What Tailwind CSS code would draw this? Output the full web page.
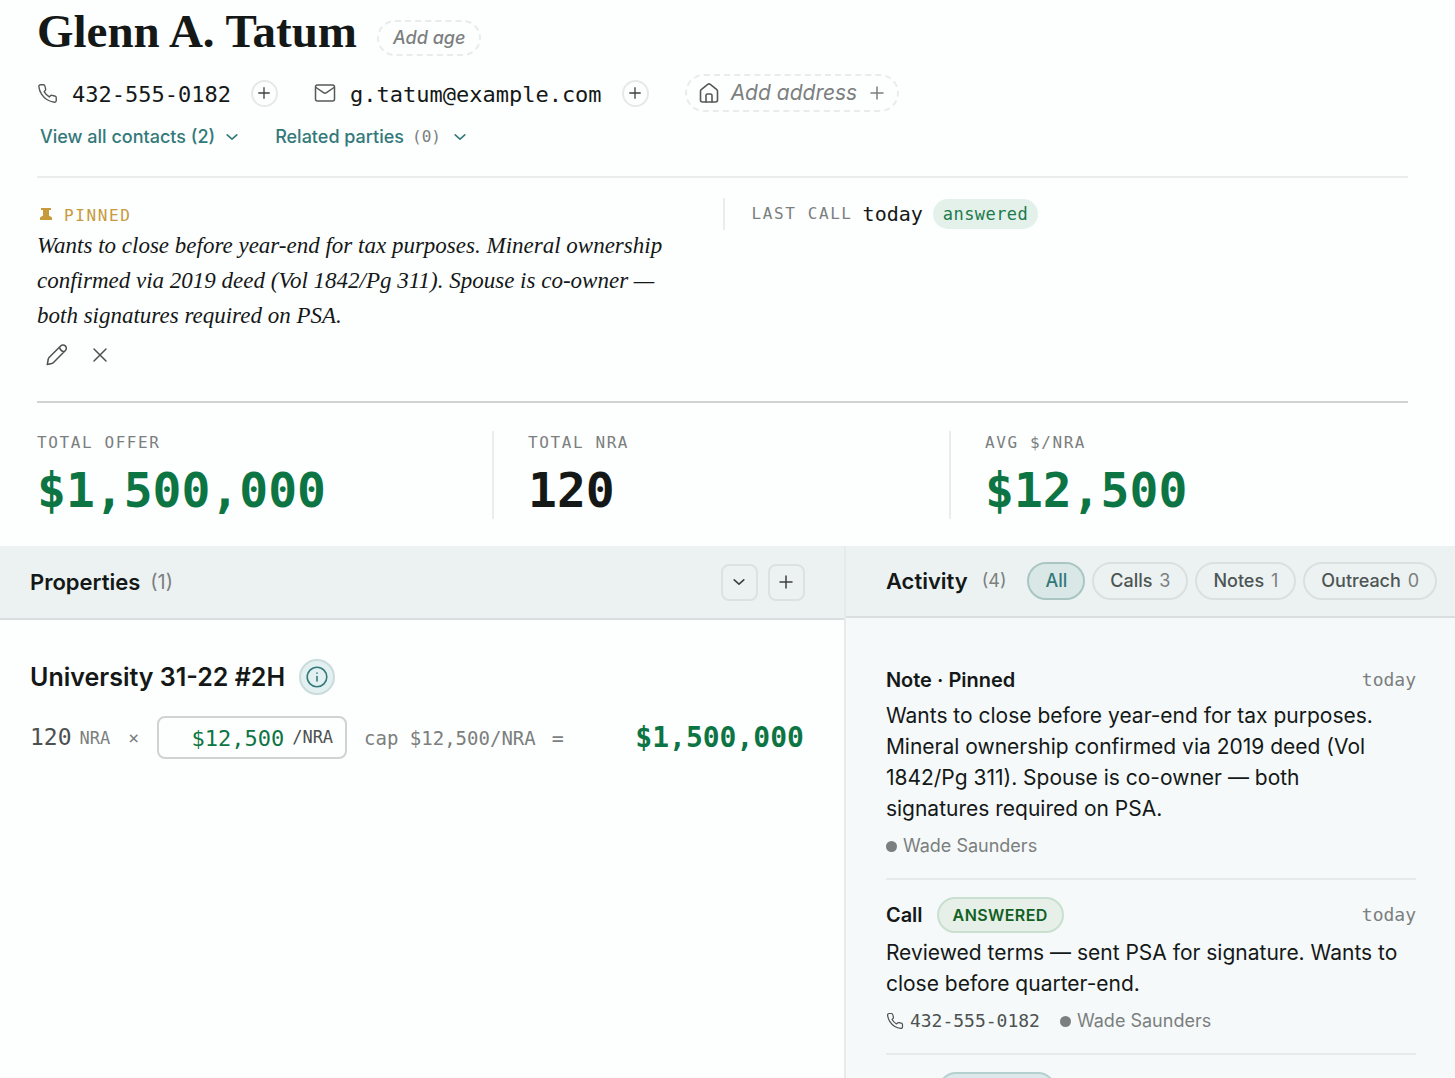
<!DOCTYPE html>
<html lang="en">
<head>
  <meta charset="UTF-8" />
  <meta name="viewport" content="width=device-width, initial-scale=1.0" />
  <title>Glenn A. Tatum</title>
  <script src="https://cdn.jsdelivr.net/npm/@tailwindcss/browser@4"></script>
</head>
<body class="h-screen overflow-hidden flex flex-col bg-[#fdfefe] text-[#141817] font-['Inter',sans-serif]">

  <!-- Shared icons -->
  <svg class="hidden">
    <symbol id="phone" viewBox="0 0 24 24" fill="none" stroke="currentColor" stroke-linecap="round" stroke-linejoin="round">
      <path d="M22 16.92v3a2 2 0 0 1-2.18 2 19.79 19.79 0 0 1-8.63-3.07 19.5 19.5 0 0 1-6-6 19.79 19.79 0 0 1-3.07-8.67A2 2 0 0 1 4.11 2h3a2 2 0 0 1 2 1.72 12.84 12.84 0 0 0 .7 2.81 2 2 0 0 1-.45 2.11L8.09 9.91a16 16 0 0 0 6 6l1.27-1.27a2 2 0 0 1 2.11-.45 12.84 12.84 0 0 0 2.81.7A2 2 0 0 1 22 16.92z" />
    </symbol>
    <symbol id="plus" viewBox="0 0 16 16" fill="none" stroke="currentColor" stroke-linecap="round">
      <path d="M8 2v12M2 8h12" />
    </symbol>
    <symbol id="chevron" viewBox="0 0 16 16" fill="none" stroke="currentColor" stroke-linecap="round" stroke-linejoin="round">
      <path d="M2.500 5.500L8 10.500l5.500-5" />
    </symbol>
  </svg>

  <header class="pl-[37px] pr-[47px] pt-1">
    <div class="flex items-center gap-5">
      <h1 class="text-[47px] leading-[54px] font-bold font-['Liberation_Serif',serif]">Glenn A. Tatum</h1>
      <button class="mt-3.5 h-9 px-3.5 rounded-full border-2 border-dashed border-[#e9ecec] text-lg leading-8 italic font-medium text-[#7b7f7e]">Add age</button>
    </div>

    <div class="flex items-center h-[38px] mt-4 font-['DejaVu_Sans_Mono',monospace] text-[22px]">
      <svg class="size-[21px] text-[#555958] stroke-[1.6]"><use href="#phone" /></svg>
      <a href="tel:4325550182" class="ml-3.5 pt-0.5">432-555-0182</a>
      <button aria-label="Add phone" class="ml-5 size-[27px] rounded-full border-2 border-[#e6e9e9] flex items-center justify-center text-[#3d4140]"><svg class="size-3.5 stroke-[1.5]"><use href="#plus" /></svg></button>
      <svg class="ml-9 size-[22px] text-[#555958]" viewBox="0 0 22 22" fill="none" stroke="currentColor" stroke-width="1.5" stroke-linejoin="round" stroke-linecap="round"><rect x="1.5" y="3" width="19" height="16" rx="2" /><path d="M2 5.5l7.5 5.2a2.6 2.6 0 0 0 3 0L20 5.5" /></svg>
      <a href="mailto:g.tatum@example.com" class="ml-3.5 pt-0.5">g.tatum@example.com</a>
      <button aria-label="Add email" class="ml-5 size-[27px] rounded-full border-2 border-[#e6e9e9] flex items-center justify-center text-[#3d4140]"><svg class="size-3.5 stroke-[1.5]"><use href="#plus" /></svg></button>
      <button class="ml-9 h-[38px] px-3 rounded-full border-2 border-dashed border-[#e9ecec] flex items-center gap-3 font-['Inter',sans-serif] text-[21px] italic text-[#7b7f7e]">
        <svg class="size-5 text-[#555958]" viewBox="0 0 20 20" fill="none" stroke="currentColor" stroke-width="1.6" stroke-linejoin="round" stroke-linecap="round"><path d="M1.5 8.2a2 2 0 0 1 .7-1.5l6.5-5.3a2 2 0 0 1 2.6 0l6.5 5.3a2 2 0 0 1 .7 1.5V17a2 2 0 0 1-2 2h-13a2 2 0 0 1-2-2z" /><path d="M7 19v-6.5a1.5 1.5 0 0 1 1.5-1.5h3a1.5 1.5 0 0 1 1.5 1.5V19" /></svg>
        Add address
        <svg class="size-4 stroke-[1.5]"><use href="#plus" /></svg>
      </button>
    </div>

    <div class="flex items-center gap-9 h-6 mt-[13px] pl-[3px] text-lg font-medium text-[#33797a]">
      <button class="flex items-center gap-2.5">View all contacts (2) <svg class="size-3.5 stroke-[1.8]"><use href="#chevron" /></svg></button>
      <button class="flex items-center gap-2">Related parties <span class="font-normal font-['DejaVu_Sans_Mono',monospace] text-base text-[#7b7f7e]">(0)</span> <svg class="ml-1 size-3.5 stroke-[1.8]"><use href="#chevron" /></svg></button>
    </div>

    <div class="grid grid-cols-2 mt-[27px] pt-5 pb-[34px] border-t-2 border-[#eaeded]">
      <section>
        <h2 class="flex items-center gap-3 pl-[3px] h-9 text-base leading-9 font-normal tracking-widest text-[#c79a3b] font-['DejaVu_Sans_Mono',monospace]">
          <svg class="size-3 mb-1" viewBox="0 0 12 12" fill="currentColor"><path d="M1 0h10v2H9v5.500l3 2V12H0V9.500l3-2V2H1z" /></svg>
          PINNED
        </h2>
        <p class="-mt-1.5 max-w-[632px] text-[23px] leading-[35px] italic font-['Liberation_Serif',serif]">Wants to close before year-end for tax purposes. Mineral ownership confirmed via 2019 deed (Vol 1842/Pg 311). Spouse is co-owner — both signatures required on PSA.</p>
        <div class="flex items-center gap-[21px] pl-2 mt-2.5 text-[#4d5150]">
          <button aria-label="Edit note"><svg class="size-6" viewBox="0 0 24 24" fill="none" stroke="currentColor" stroke-width="1.5" stroke-linejoin="round"><path d="M3.800 14.800L15.600 3a2.900 2.900 0 0 1 4.800 4.600L8.500 19.500a4 4 0 0 1-1.800 1L2.300 21.500l.9-5a4 4 0 0 1 .6-1.700zM14.500 4.200q1 3.800 4.600 4.600" /></svg></button>
          <button aria-label="Unpin note"><svg class="size-5" viewBox="0 0 20 20" fill="none" stroke="currentColor" stroke-width="1.5" stroke-linecap="round"><path d="M4 4l12 12M16 4L4 16" /></svg></button>
        </div>
      </section>
      <section class="flex items-center gap-2.5 h-8 pl-[27px] border-l-2 border-[#eaeded] font-['DejaVu_Sans_Mono',monospace]">
        <span class="text-base tracking-widest text-[#7b7f7e]">LAST CALL</span>
        <span class="text-xl">today</span>
        <span class="h-[30px] px-2.5 rounded-full bg-[#e3f1ea] text-[17px] leading-[30px] tracking-wide text-[#1b7a4b]">answered</span>
      </section>
    </div>

    <dl class="grid grid-cols-3 pt-7 pb-[27px] border-t-2 border-[#cfd3d2] font-['DejaVu_Sans_Mono',monospace]">
      <div class="border-r-2 border-[#eaeded]">
        <dt class="text-base leading-6 tracking-widest text-[#7b7f7e]">TOTAL OFFER</dt>
        <dd class="mt-1.5 text-5xl leading-[58px] font-bold text-[#0d7544]">$1,500,000</dd>
      </div>
      <div class="pl-[34px] border-r-2 border-[#eaeded]">
        <dt class="text-base leading-6 tracking-widest text-[#7b7f7e]">TOTAL NRA</dt>
        <dd class="mt-1.5 text-5xl leading-[58px] font-bold">120</dd>
      </div>
      <div class="pl-[34px]">
        <dt class="text-base leading-6 tracking-widest text-[#7b7f7e]">AVG $/NRA</dt>
        <dd class="mt-1.5 text-5xl leading-[58px] font-bold text-[#0d7544]">$12,500</dd>
      </div>
    </dl>
  </header>

  <main class="grid grid-cols-[58fr_42fr] flex-1 min-h-0">
    <section class="min-w-0">
      <div class="flex items-center gap-2.5 h-[74px] pl-[30px] pr-[39px] bg-[#ecf2f2] border-b-2 border-[#d9dfdf]">
        <h2 class="text-[22px] font-semibold">Properties</h2>
        <span class="text-xl text-[#7b7f7e]">(1)</span>
        <button aria-label="Collapse" class="ml-auto size-[37px] rounded-lg border-2 border-[#dbe2e1] flex items-center justify-center text-[#3d4140]"><svg class="size-3.5 stroke-[1.8]"><use href="#chevron" /></svg></button>
        <button aria-label="Add property" class="size-[37px] rounded-lg border-2 border-[#dbe2e1] flex items-center justify-center text-[#3d4140]"><svg class="size-4 stroke-[1.5]"><use href="#plus" /></svg></button>
      </div>

      <div class="pl-[30px] pr-10 pt-[39px]">
        <div class="flex items-center gap-3.5">
          <h3 class="text-[25px] leading-9 font-semibold">University 31-22 #2H</h3>
          <button aria-label="Property info" class="size-9 rounded-full border-2 border-[#c9dcda] bg-[#e3f0f1] flex items-center justify-center text-[#33797a]">
            <svg class="size-[22px]" viewBox="0 0 22 22" fill="none" stroke="currentColor" stroke-width="1.6" stroke-linecap="round"><circle cx="11" cy="11" r="9.800" /><path d="M11 10.500v4.500M11 7v.200" /></svg>
          </button>
        </div>
        <div class="flex items-center mt-[21px] font-['DejaVu_Sans_Mono',monospace] text-[#7b7f7e]">
          <span class="text-[23px] text-[#4d5150]">120</span>
          <span class="ml-2 pt-0.5 text-[17px]">NRA</span>
          <span class="ml-[18px] text-lg">×</span>
          <label class="ml-[18px] flex items-center gap-2 h-[43px] w-[190px] pr-3 rounded-lg border-2 border-[#cfd3d2] text-[17px] text-[#4d5150]">
            <input type="text" value="$12,500" aria-label="Price per NRA" class="min-w-0 flex-1 pt-0.5 text-right text-[22px] text-[#0d7544] outline-none" />
            /NRA
          </label>
          <span class="ml-[17px] pt-0.5 text-[19px]">cap $12,500/NRA</span>
          <span class="ml-4 text-xl">=</span>
          <span class="ml-auto text-[28px] leading-8 font-bold text-[#0d7544]">$1,500,000</span>
        </div>
      </div>
    </section>

    <section class="min-w-0 overflow-hidden border-l-2 border-[#e6eaeb] bg-[#f5f9fa]">
      <div class="flex items-center h-[72px] pl-10 pr-[18px] bg-[#ecf2f2] border-b-2 border-[#d9dfdf] whitespace-nowrap">
        <h2 class="text-[22px] font-semibold">Activity</h2>
        <span class="ml-3.5 text-lg text-[#7b7f7e]">(4)</span>
        <div class="ml-auto flex gap-[7px] text-lg font-medium text-[#4d5553]">
          <button class="h-[38px] px-4 rounded-full border-2 border-[#a9c6c3] bg-[#d9e8e7] text-[#33797a]">All</button>
          <button class="h-[38px] px-4 rounded-full border-2 border-[#d9e0df]">Calls <span class="ml-0.5 font-normal text-[#7b7f7e]">3</span></button>
          <button class="h-[38px] px-4 rounded-full border-2 border-[#d9e0df]">Notes <span class="ml-0.5 font-normal text-[#7b7f7e]">1</span></button>
          <button class="h-[38px] px-4 rounded-full border-2 border-[#d9e0df]">Outreach <span class="ml-0.5 font-normal text-[#7b7f7e]">0</span></button>
        </div>
      </div>

      <div class="pl-10 pr-[39px] pt-[27px]">
        <article class="pt-[17px] pb-[18px] border-b-2 border-[#e6eaeb]">
          <div class="flex items-center justify-between h-9">
            <h3 class="text-xl font-semibold">Note · Pinned</h3>
            <time class="text-lg text-[#7b7f7e] font-['DejaVu_Sans_Mono',monospace]">today</time>
          </div>
          <p class="mt-0.5 pr-3 text-[21px] leading-[31px]">Wants to close before year-end for tax purposes. Mineral ownership confirmed via 2019 deed (Vol 1842/Pg 311). Spouse is co-owner — both signatures required on PSA.</p>
          <div class="flex items-center gap-1.5 mt-2 h-7 text-lg text-[#7b7f7e]">
            <span class="size-[11px] rounded-full bg-[#7b7f7e]"></span>Wade Saunders
          </div>
        </article>

        <article class="pt-[17px] pb-[18px] border-b-2 border-[#e6eaeb]">
          <div class="flex items-center h-9">
            <h3 class="text-xl font-semibold">Call</h3>
            <span class="ml-3.5 h-9 px-3.5 rounded-full border-2 border-[#c9dfcf] bg-[#e6f0e8] text-base leading-8 font-semibold tracking-wide text-[#11601f]">ANSWERED</span>
            <time class="ml-auto text-lg text-[#7b7f7e] font-['DejaVu_Sans_Mono',monospace]">today</time>
          </div>
          <p class="mt-1 pr-3 text-[21px] leading-[31px]">Reviewed terms — sent PSA for signature. Wants to close before quarter-end.</p>
          <div class="flex items-center mt-2 h-7 text-lg text-[#7b7f7e]">
            <svg class="size-[18px] text-[#4d5150] stroke-[1.6]"><use href="#phone" /></svg>
            <span class="ml-1.5 text-[#4d5150] font-['DejaVu_Sans_Mono',monospace]">432-555-0182</span>
            <span class="ml-5 mr-1.5 size-[11px] rounded-full bg-[#7b7f7e]"></span>Wade Saunders
          </div>
        </article>

        <article class="pt-[17px]">
          <span class="block ml-[52px] h-9 w-[118px] rounded-full border-2 border-[#b5d0ce] bg-[#dce9eb]"></span>
        </article>
      </div>
    </section>
  </main>
</body>
</html>
